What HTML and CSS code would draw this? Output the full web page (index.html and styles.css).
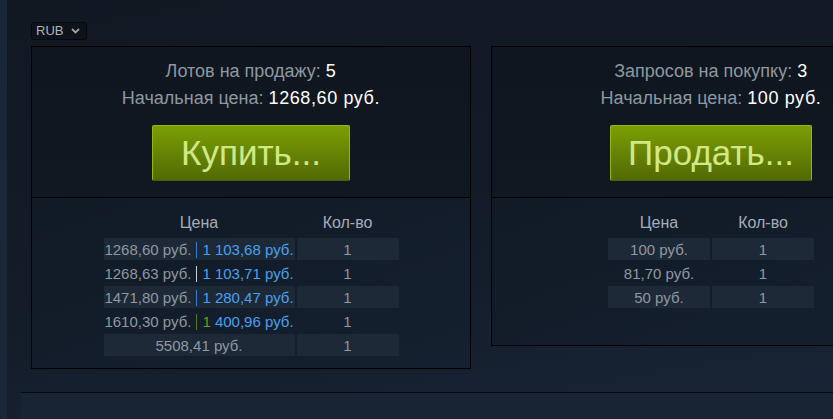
FILE: index.html
```html
<!DOCTYPE html>
<html lang="ru">
<head>
<meta charset="utf-8">
<title>Market</title>
<link rel="stylesheet" href="styles.css">
</head>
<body>
<div class="strip"></div>
<div class="page">
  <div class="content">
    <div class="currency">
      <span class="currency-label">RUB</span>
      <svg class="chev" width="9" height="6" viewBox="0 0 9 6"><path d="M1 1 L4.5 4.5 L8 1" fill="none" stroke="#9aa0a6" stroke-width="1.8"/></svg>
    </div>
    <div class="columns">
      <section class="panel panel-sell">
        <div class="panel-top">
          <div class="info"><span class="label">Лотов на продажу:</span> <span class="value">5</span></div>
          <div class="info"><span class="label">Начальная цена:</span> <span class="value">1268,60 руб.</span></div>
          <a class="btn">Купить...</a>
        </div>
        <div class="panel-bottom">
          <table class="orders orders-sell">
            <thead>
              <tr><th>Цена</th><th>Кол-во</th></tr>
            </thead>
            <tbody>
              <tr class="odd"><td class="price">1268,60 руб.<span class="bar bar-blue"></span><span class="net">1 103,68 руб.</span></td><td>1</td></tr>
              <tr><td class="price">1268,63 руб.<span class="bar bar-light"></span><span class="net">1 103,71 руб.</span></td><td>1</td></tr>
              <tr class="odd"><td class="price">1471,80 руб.<span class="bar bar-blue"></span><span class="net">1 280,47 руб.</span></td><td>1</td></tr>
              <tr><td class="price">1610,30 руб.<span class="bar bar-green"></span><span class="net"><span class="green">1</span> 400,96 руб.</span></td><td>1</td></tr>
              <tr class="odd"><td class="price">5508,41 руб.</td><td>1</td></tr>
            </tbody>
          </table>
        </div>
      </section>
      <section class="panel panel-buy">
        <div class="panel-top">
          <div class="info"><span class="label">Запросов на покупку:</span> <span class="value">3</span></div>
          <div class="info"><span class="label">Начальная цена:</span> <span class="value">100 руб.</span></div>
          <a class="btn">Продать...</a>
        </div>
        <div class="panel-bottom">
          <table class="orders orders-buy">
            <thead>
              <tr><th>Цена</th><th>Кол-во</th></tr>
            </thead>
            <tbody>
              <tr class="odd"><td>100 руб.</td><td>1</td></tr>
              <tr><td>81,70 руб.</td><td>1</td></tr>
              <tr class="odd"><td>50 руб.</td><td>1</td></tr>
            </tbody>
          </table>
        </div>
      </section>
    </div>
  </div>
  <div class="rule"></div>
</div>
</body>
</html>
```
FILE: styles.css
```css
html, body {
  margin: 0;
  padding: 0;
  overflow: hidden;
  height: 100%;
}
body {
  display: flex;
  font-family: "Liberation Sans", Arial, sans-serif;
  background: linear-gradient(170deg, #111822 0%, #131c28 55%, #182537 100%);
  color: #8f98a0;
}
.strip {
  width: 7px;
  flex: none;
  background: #1a2739;
}
.page {
  flex: 1;
  min-width: 0;
  display: flex;
  flex-direction: column;
}
.content {
  padding: 22px 0 0 24px;
}
.currency {
  width: 50px;
  height: 16px;
  border: 1px solid #05080c;
  border-radius: 3px;
  background: #0d131a;
  display: flex;
  align-items: center;
  gap: 8px;
  padding-left: 4px;
}
.currency-label {
  font-size: 13px;
  color: #aeb3b8;
  line-height: 16px;
}
.chev { display: block; }
.columns {
  margin-top: 6px;
  display: flex;
  gap: 20px;
  align-items: flex-start;
  width: 900px;
}
.panel {
  width: 438px;
  flex: none;
  border: 1px solid #000;
  background: #101720;
}
.panel-top {
  padding: 11px 0 16px;
  text-align: center;
  border-bottom: 1px solid #000;
  background: linear-gradient(180deg, #0f161f, #101822);
}
.info {
  font-size: 18px;
  line-height: 27px;
}
.label { color: #8f98a0; }
.value { color: #ffffff; letter-spacing: 0.6px; }
.btn {
  display: inline-block;
  box-sizing: border-box;
  min-width: 198px;
  margin-top: 13px;
  height: 56px;
  line-height: 54px;
  padding: 0 17px;
  font-size: 35px;
  color: #d2e885;
  border: 1px solid #92b80a;
  border-bottom-color: #4d6204;
  border-radius: 2px;
  background: linear-gradient(180deg, #7b9f05 0%, #526904 100%);
}
.panel-bottom {
  padding: 10px 0;
  background: linear-gradient(160deg, #111a25, #152030);
}
.panel-buy .panel-bottom {
  padding-bottom: 35px;
}
.orders {
  margin: 0 auto;
  border-spacing: 2px;
  font-size: 15px;
  text-align: center;
}
.orders th {
  height: 26px;
  padding: 0;
  font-weight: normal;
  color: #a3adb6;
  font-size: 16px;
}
.orders td {
  height: 22px;
  padding: 0;
  color: #8f98a0;
  white-space: nowrap;
}
.orders tr.odd td {
  background: #1d2937;
}
.orders-sell td.price { width: 191px; }
.orders td:last-child { width: 102px; }
.orders-buy td:first-child { width: 102px; }
.bar {
  display: inline-block;
  width: 1px;
  height: 16px;
  vertical-align: -3px;
  margin: 0 5px 0 5px;
}
.bar-blue { background: #2f7fd6; }
.bar-light { background: #c9d2da; }
.bar-green { background: #4f7a1e; }
.net { color: #4aa0ee; }
.green { color: #6a9a1e; }
.rule {
  margin: 23px 0 0 14px;
  border-top: 1px solid #05080c;
  height: 30px;
  background: #182434;
}
```
